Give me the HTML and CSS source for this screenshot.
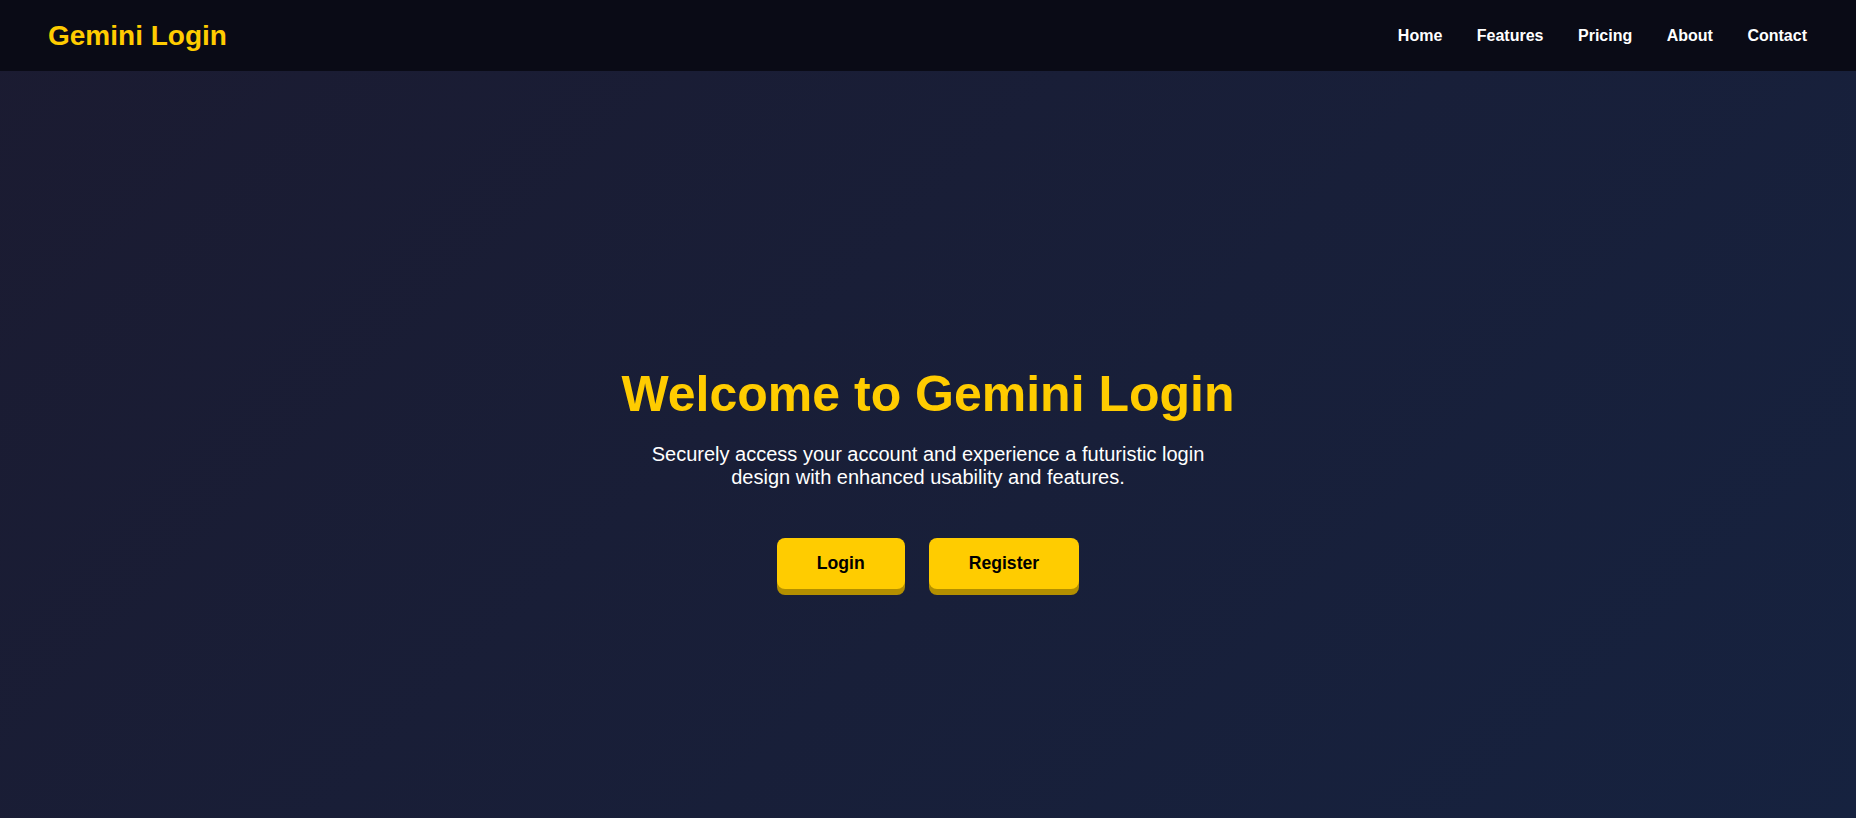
FILE: index.html
```html
<!DOCTYPE html>
<html lang="en">
<head>
<meta charset="utf-8">
<title>Gemini Login</title>
<link rel="stylesheet" href="styles.css">
</head>
<body>
  <header class="site-header">
    <div class="logo">Gemini Login</div>
    <nav class="nav">
      <a href="#" class="nav-link">Home</a>
      <a href="#" class="nav-link">Features</a>
      <a href="#" class="nav-link">Pricing</a>
      <a href="#" class="nav-link">About</a>
      <a href="#" class="nav-link">Contact</a>
    </nav>
  </header>
  <main class="hero">
    <h1 class="hero-title">Welcome to Gemini Login</h1>
    <p class="hero-text">Securely access your account and experience a futuristic login design with enhanced usability and features.</p>
    <div class="hero-actions">
      <a href="#" class="btn">Login</a>
      <a href="#" class="btn">Register</a>
    </div>
  </main>
</body>
</html>
```

FILE: styles.css
```css
* { box-sizing: border-box; }

html, body {
  margin: 0;
  padding: 0;
}

body {
  min-height: 100vh;
  display: flex;
  flex-direction: column;
  font-family: "Liberation Sans", Arial, sans-serif;
  color: #ffffff;
  background: linear-gradient(135deg, #1b1b31 0%, #16223f 100%);
}

.site-header {
  display: flex;
  justify-content: space-between;
  align-items: center;
  padding: 20px 49px 19px 48px;
  background: #0a0b16;
}

.logo {
  font-size: 28px;
  font-weight: bold;
  color: #ffcc00;
}

.nav {
  display: flex;
  gap: 34.5px;
}

.nav-link {
  color: #ffffff;
  text-decoration: none;
  font-size: 16px;
  font-weight: bold;
}

.hero {
  flex: 1;
  display: flex;
  flex-direction: column;
  align-items: center;
  justify-content: center;
  padding-top: 64px;
  text-align: center;
}

.hero-title {
  margin: 0 0 20px;
  font-size: 50px;
  font-weight: bold;
  color: #ffcc00;
}

.hero-text {
  margin: 0 0 49px;
  max-width: 600px;
  font-size: 20px;
  color: #ffffff;
}

.hero-actions {
  display: flex;
  gap: 24px;
}

.btn {
  display: inline-block;
  padding: 15px 40px;
  font-size: 17.6px;
  font-weight: bold;
  color: #000000;
  text-decoration: none;
  background: #ffcc00;
  border-radius: 8px;
  box-shadow: 0 6px 0 #b38f00;
}
```
